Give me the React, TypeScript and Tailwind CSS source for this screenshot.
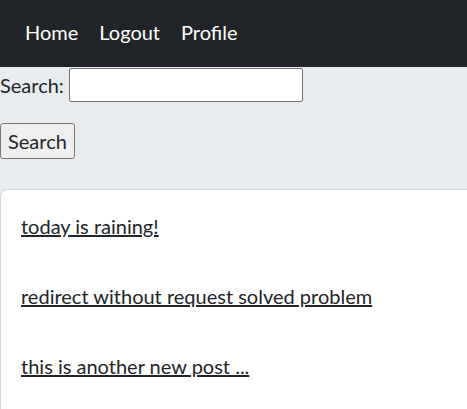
export default function App() {
  const posts = ['today is raining!', 'redirect without request solved problem', 'this is another new post ...'];
  return (
    <div className="min-h-screen w-[467px] overflow-hidden bg-[#e9ecef] font-['Lato',sans-serif] text-[20px] text-[#212529]">
      {/* navbar */}
      <nav className="flex h-[67px] items-center gap-[21px] bg-[#212529] px-[25px] pb-[3px] text-white">
        <a href="#">Home</a>
        <a href="#">Logout</a>
        <a href="#">Profile</a>
      </nav>

      {/* search */}
      <form className="flex flex-col items-start">
        <div className="mt-[1px] flex items-center gap-[5px]">
          <label>Search:</label>
          <input className="h-[34px] w-[234px] rounded-[2px] border border-[#767676] bg-white" />
        </div>
        <button
          type="button"
          className="mt-[21px] h-[36px] rounded-[3px] border border-[#767676] bg-[#efefef] px-[7px]"
        >
          Search
        </button>
      </form>

      {/* posts */}
      <div className="mt-[30px] w-[600px] rounded-[8px] border border-[#d4d6d8] bg-white px-[20px] pt-[24px]">
        {posts.map((p) => (
          <p key={p} className="mb-[45px] leading-[25px]">
            <a href="#" className="underline">{p}</a>
          </p>
        ))}
      </div>
    </div>
  );
}
